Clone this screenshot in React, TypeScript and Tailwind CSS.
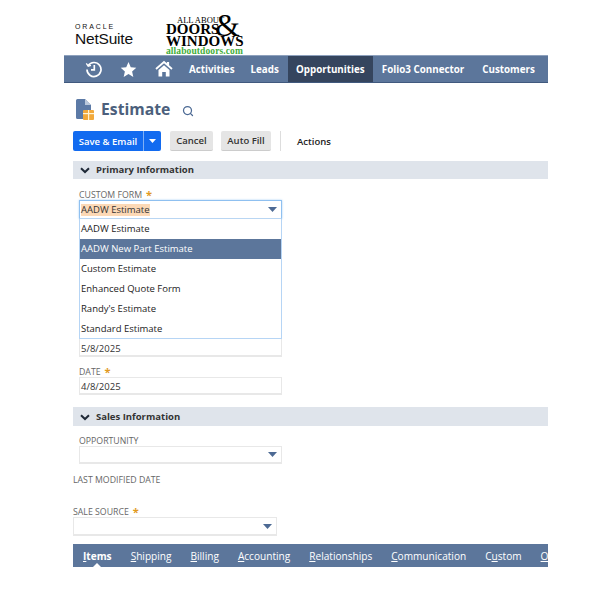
import React from 'react';
import { Search } from 'lucide-react';

const font = { fontFamily: '"Open Sans", sans-serif' };

const formOptions = ['AADW Estimate', 'AADW New Part Estimate', 'Custom Estimate', 'Enhanced Quote Form', "Randy's Estimate", 'Standard Estimate'];

function Caret({ color = '#4d6a94', width = 9, height = 5 }: { color?: string; width?: number; height?: number }) {
  return (
    <svg width={width} height={height} viewBox="0 0 11 6" preserveAspectRatio="none" className="shrink-0">
      <path d="M0 0H11L5.5 6Z" fill={color} />
    </svg>
  );
}

function Chevron() {
  return (
    <svg width="10" height="7" viewBox="0 0 10 7" className="shrink-0">
      <path d="M1 1.2L5 5L9 1.2" fill="none" stroke="#1f2937" strokeWidth="2" />
    </svg>
  );
}

function Star() {
  return <span className="text-[11px] font-bold leading-none text-[#e19a1f] ml-[4px] mt-[-1px]">*</span>;
}

function Label({ children, className = '' }: { children: React.ReactNode; className?: string }) {
  return <div className={`h-[12px] pt-[2px] text-[8.75px] leading-[12px] text-[#666] flex items-center ${className}`}>{children}</div>;
}

function SectionBar({ title, className = '' }: { title: string; className?: string }) {
  return (
    <div className={`bg-[#dfe4eb] flex items-center pl-[7px] gap-[6px] ${className}`}>
      <Chevron />
      <span className="text-[9.5px] font-bold text-[#333]">{title}</span>
    </div>
  );
}

function TextBox({ value, className = '' }: { value?: string; className?: string }) {
  return (
    <div className={`h-[18px] w-[203px] bg-white border border-[#e8e8e8] border-b-2 flex items-center pl-[1px] text-[9.5px] text-[#333] ${className}`}>
      {value}
    </div>
  );
}

function SelectBox({ className = '' }: { className?: string }) {
  return (
    <div className={`bg-white border border-[#e8e8e8] border-b-2 flex items-center justify-end pr-[4px] ${className}`}>
      <Caret />
    </div>
  );
}

function NetSuiteLogo() {
  return (
    <div className="w-[91px] pt-[24px] text-[#111] shrink-0" style={{ fontFamily: '"Liberation Sans", sans-serif' }}>
      <div className="text-[7px] leading-[6px] tracking-[1.9px]">ORACLE</div>
      <div className="text-[15.5px] leading-[16px] mt-[1px] tracking-[-0.2px]">NetSuite</div>
    </div>
  );
}

function DoorsLogo() {
  return (
    <div className="relative w-[82px] h-[55px] text-black shrink-0" style={{ fontFamily: '"Liberation Serif", serif' }}>
      <div className="absolute left-[11px] top-[16px] text-[8.5px] leading-[9px] whitespace-nowrap">ALL ABOUT</div>
      <div className="absolute left-0 top-[23px] text-[15px] leading-[13px] font-bold">DOORS</div>
      <div className="absolute left-[49px] top-[11px] text-[32px] leading-[28px]">&amp;</div>
      <div className="absolute left-0 top-[35px] text-[15px] leading-[13px] font-bold whitespace-nowrap">WINDOWS</div>
      <div className="absolute left-0 top-[46px] text-[9.5px] leading-[10px] font-bold text-[#3fae3a] whitespace-nowrap tracking-[0.1px]">allaboutdoors.com</div>
    </div>
  );
}

function NavBar() {
  return (
    <div className="h-[28px] w-[484px] bg-[#5c769b] border-t border-t-[#8ea1bd] border-b border-b-[#40597e] flex items-stretch text-white text-[9.8px] font-bold whitespace-nowrap overflow-hidden">
      <div className="w-[21px] shrink-0" />
      <svg width="18" height="18" viewBox="0 0 18 18" className="self-center shrink-0" fill="none" stroke="white" strokeWidth="1.7">
        <path d="M3.2 5.6A7 7 0 1 1 2 9.5" />
        <path d="M1.3 3.4L3.2 6.2L6 5.4" strokeWidth="1.3" />
        <path d="M9.3 5V9.8H6" />
      </svg>
      <svg width="17" height="17" viewBox="0 0 24 24" className="self-center shrink-0 ml-[17px]" fill="white">
        <path d="M12 1.5L15.2 8.7L23 9.5L17.1 14.8L18.8 22.5L12 18.5L5.2 22.5L6.9 14.8L1 9.5L8.8 8.7Z" />
      </svg>
      <svg width="18" height="18" viewBox="0 0 18 18" className="self-center shrink-0 ml-[18px]" fill="none">
        <path d="M1 9L9 2L17 9" stroke="white" strokeWidth="1.8" />
        <path d="M13 2V5" stroke="white" strokeWidth="2.2" />
        <path d="M3.5 10L9 5.3L14.5 10V16.5H10.8V12H7.2V16.5H3.5Z" fill="white" />
      </svg>
      <span className="flex items-center pt-[2px] ml-[16px]">Activities</span>
      <span className="flex items-center pt-[2px] ml-[16px]">Leads</span>
      <span className="ml-[9px] pt-[2px] bg-[#35455e] flex items-center justify-center w-[85px] shrink-0">Opportunities</span>
      <span className="flex items-center pt-[2px] ml-[9px]">Folio3 Connector</span>
      <span className="flex items-center pt-[2px] ml-[18px]">Customers</span>
    </div>
  );
}

function PageTitle() {
  return (
    <div className="h-[48px] pl-[3px] pt-[6px] flex items-center">
      <svg width="20" height="22" viewBox="0 0 20 22" className="shrink-0">
        <path d="M0 1.5A1.5 1.5 0 0 1 1.5 0H9L15 6V20H1.5A1.5 1.5 0 0 1 0 18.5Z" fill="#5c7aa6" />
        <path d="M9 0L15 6H9Z" fill="#b9c8dc" />
        <rect x="7" y="11" width="11" height="10" rx="1" fill="#f2a93b" />
        <rect x="7" y="14" width="11" height="1.2" fill="#fff3d6" />
        <rect x="12" y="11" width="1.2" height="10" fill="#fff3d6" />
      </svg>
      <span className="ml-[5px] text-[15.75px] font-bold text-[#4c5f7c] leading-none">Estimate</span>
      <Search size={12} color="#4c6a94" strokeWidth={2.5} className="ml-[12px] mt-[1px]" />
    </div>
  );
}

function Toolbar() {
  return (
    <div className="h-[20px] flex items-stretch text-[9.5px] font-semibold">
      <div className="w-[88px] bg-[#126bf0] rounded-[2px] text-white flex">
        <span className="w-[71px] pt-[2px] flex items-center justify-center border-r border-r-[#7fb0f5]">Save &amp; Email</span>
        <span className="flex-1 flex items-center justify-center"><Caret color="white" width={7} height={4} /></span>
      </div>
      <div className="ml-[9px] w-[43px] pt-[2px] bg-[#e5e5e5] border-b border-b-[#ccc] rounded-[2px] text-[#333] flex items-center justify-center">Cancel</div>
      <div className="ml-[8px] w-[50px] pt-[2px] bg-[#e5e5e5] border-b border-b-[#ccc] rounded-[2px] text-[#333] flex items-center justify-center">Auto Fill</div>
      <div className="ml-[9px] w-px bg-[#ddd]" />
      <span className="ml-[16px] pt-[2px] flex items-center text-[#222]">Actions</span>
    </div>
  );
}

function CustomFormField() {
  return (
    <div className="w-[203px]">
      <div className="h-[19px] border border-[#8fc0f0] border-b-[#b9d6f3] flex items-center justify-between pl-[1px] pr-[4px] bg-white shadow-[0_0_2px_#a9d0f5]">
        <span className="bg-[#fcd9b6] text-[9.5px] leading-[12px] text-[#333]">AADW Estimate</span>
        <Caret />
      </div>
      <div className="h-[120px] bg-white border-x border-b border-[#b6d5f5]">
        {formOptions.map((option, i) => (
          <div
            key={option}
            className={`h-[20px] flex items-center pl-[1px] text-[9.5px] ${i === 1 ? 'bg-[#5c769b] text-white' : 'text-[#222]'}`}
          >
            {option}
          </div>
        ))}
      </div>
    </div>
  );
}

function TabBar() {
  const tabs: [string, string][] = [['S', 'hipping'], ['B', 'illing'], ['A', 'ccounting'], ['R', 'elationships'], ['C', 'ommunication']];
  return (
    <div className="relative mt-[8px] h-[23px] pt-[2px] bg-[#5c769b] flex items-center pl-[10px] gap-[19px] text-[10.1px] text-white whitespace-nowrap overflow-hidden">
      <span className="font-bold"><u>I</u>tems</span>
      {tabs.map(([key, rest]) => (
        <span key={key}><u>{key}</u>{rest}</span>
      ))}
      <span>C<u>u</u>stom</span>
      <span><u>O</u>ther</span>
      <div className="absolute left-[20px] bottom-0 w-0 h-0 border-x-[4px] border-x-transparent border-b-[4px] border-b-white" />
    </div>
  );
}

export default function App() {
  return (
    <div className="w-[600px] h-[600px] bg-white overflow-hidden" style={font}>
      <div className="w-[548px] pl-[64px] overflow-hidden">
        <div className="h-[55px] flex pl-[11px]">
          <NetSuiteLogo />
          <DoorsLogo />
        </div>
        <NavBar />
        <div className="pl-[9px]">
          <PageTitle />
          <Toolbar />
          <SectionBar title="Primary Information" className="mt-[10px] h-[18px]" />
          <div className="pl-[6px]">
            <Label className="mt-[9px]">CUSTOM FORM <Star /></Label>
            <CustomFormField />
            <TextBox value="5/8/2025" className="pt-[5px] border-t-0" />
            <Label className="mt-[8px]">DATE <Star /></Label>
            <TextBox value="4/8/2025" className="pt-[4px]" />
          </div>
          <SectionBar title="Sales Information" className="mt-[12px] h-[19px] pt-[2px]" />
          <div className="pl-[6px]">
            <Label className="mt-[8px]">OPPORTUNITY</Label>
            <SelectBox className="w-[203px] h-[18px]" />
          </div>
          <Label className="mt-[9px]">LAST MODIFIED DATE</Label>
          <Label className="mt-[20px]">SALE SOURCE <Star /></Label>
          <SelectBox className="w-[204px] h-[19px]" />
          <TabBar />
        </div>
      </div>
    </div>
  );
}
